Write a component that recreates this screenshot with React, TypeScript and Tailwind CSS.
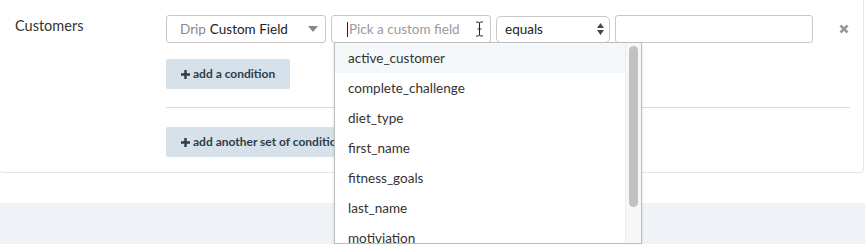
import React from 'react';

const fields = [
  'active_customer',
  'complete_challenge',
  'diet_type',
  'first_name',
  'fitness_goals',
  'last_name',
  'motiviation',
];

const Plus: React.FC = () => (
  <svg width="9" height="9" viewBox="0 0 9 9" className="mr-[3px]">
    <path d="M3.3 0h2.4v3.3H9v2.4H5.7V9H3.3V5.7H0V3.3h3.3z" fill="#2f3d48" />
  </svg>
);

const App: React.FC = () => {
  return (
    <div className="min-h-screen bg-[#eff2f6] font-['Lato',sans-serif] text-[#333]">
      <div className="bg-white h-[203px]">
        <div className="bg-white h-[173px] border-b border-x border-[#e1e8ec] rounded-b-[4px] mx-[-1px] w-[865px] flex">
          <div className="w-[166px] shrink-0 pl-[15px] pt-[15px] text-[14.5px] text-[#333]">Customers</div>
          <div className="flex-1 pt-[15px] pr-[13px]">
            <div className="flex items-center relative">
              <div className="w-[160px] h-[28px] border border-[#c8c8c8] rounded-[3px] flex items-center pl-[13px] pr-[6px] text-[13.5px]">
                <span className="text-[#888]">Drip</span>
                <span className="ml-[4px] text-[#222]">Custom Field</span>
                <svg width="10" height="6" viewBox="0 0 10 6" className="ml-auto mr-[1px]">
                  <path d="M0 0h10L5 6z" fill="#888" />
                </svg>
              </div>
              <div className="relative ml-[5px]">
                <div className="w-[160px] h-[28px] border border-[#c8c8c8] rounded-[3px] flex items-center pl-[15px] text-[13.5px]">
                  <span className="w-px h-[15px] bg-[#222] mr-px" />
                  <span className="text-[#9a9a9a]">Pick a custom field</span>
                  <svg width="9" height="16" viewBox="0 0 9 16" className="ml-auto mr-[6px]">
                    <path d="M1 1h2.5l1 1 1-1H8M4.5 2v12M1 15h2.5l1-1 1 1H8M2.5 8h4" stroke="#222" strokeWidth="1" fill="none" />
                  </svg>
                </div>
                <div className="absolute left-[3px] top-[27px] w-[308px] h-[202px] overflow-hidden bg-white border border-[#bdbdbd] shadow-[0_1px_2px_rgba(0,0,0,0.15)] flex z-10">
                  <div className="flex-1 flex flex-col">
                    {fields.map((f, i) => (
                      <div
                        key={f}
                        className={
                          'h-[30px] shrink-0 flex items-center pl-[13px] pb-px text-[13.5px] leading-[16px] text-[#333] ' +
                          (i === 0 ? 'bg-[#f4f8fb]' : '')
                        }
                      >
                        {f}
                      </div>
                    ))}
                  </div>
                  <div className="w-[16px] shrink-0 bg-[#f7f7f7] border-l border-[#ececec] flex justify-center pt-[3px]">
                    <div className="w-[9px] h-[161px] rounded-full bg-[#c1c1c1]" />
                  </div>
                </div>
              </div>
              <div className="ml-[5px] w-[114px] h-[27px] border border-[#c8c8c8] rounded-[5px] flex items-center pl-[8px] pr-[5px] text-[13.5px] text-[#222]">
                equals
                <svg width="7" height="12" viewBox="0 0 7 12" className="ml-auto">
                  <path d="M3.5 0L7 5H0zM0 7h7l-3.5 5z" fill="#3c4a55" />
                </svg>
              </div>
              <div className="ml-[5px] w-[198px] h-[28px] border border-[#c8c8c8] rounded-[3px]" />
              <svg width="10" height="10" viewBox="0 0 10 10" className="ml-[26px]">
                <path d="M1.5 1.5l7 7M8.5 1.5l-7 7" stroke="#999" strokeWidth="2.6" />
              </svg>
            </div>
            <button className="mt-[16px] h-[30px] px-[15px] bg-[#d6e1e9] rounded-[2px] flex items-center text-[12px] font-bold text-[#2f3d48]">
              <Plus />add a condition
            </button>
            <div className="mt-[18px] border-t border-[#d5dde1]" />
            <button className="mt-[19px] h-[30px] px-[15px] bg-[#d6e1e9] rounded-[2px] flex items-center text-[12px] font-bold text-[#2f3d48]">
              <Plus />add another set of conditions
            </button>
          </div>
        </div>
      </div>
    </div>
  );
};

export default App;
